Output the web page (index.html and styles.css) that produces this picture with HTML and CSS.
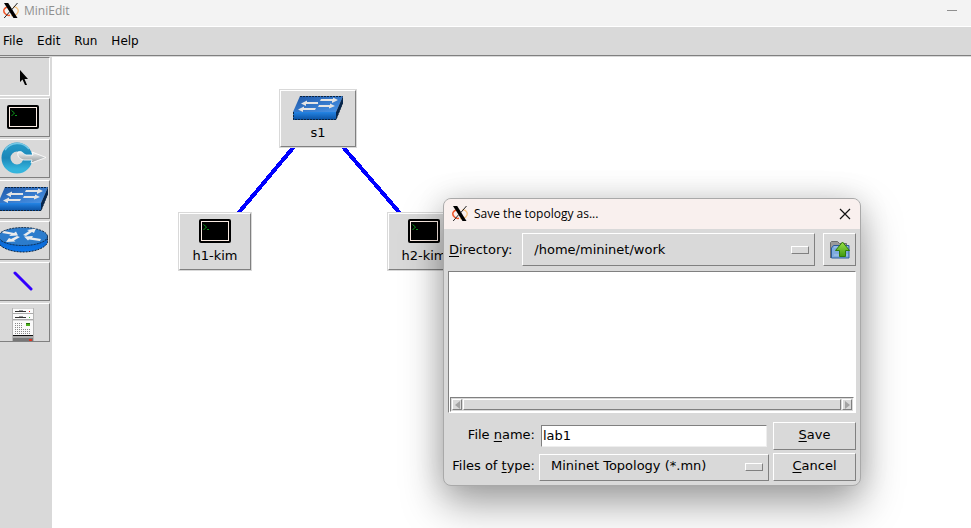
FILE: index.html
```
<!DOCTYPE html>
<html lang="en">
<head>
<meta charset="utf-8">
<title>MiniEdit</title>
<link rel="stylesheet" href="styles.css">
</head>
<body>
<svg class="defs" width="0" height="0" aria-hidden="true">
  <defs>
    <linearGradient id="blue" x1="0" y1="0" x2="1" y2="1">
      <stop offset="0" stop-color="#1d56a6"/><stop offset="1" stop-color="#4a96ea"/>
    </linearGradient>
    <linearGradient id="front" x1="0" y1="0" x2="0" y2="1">
      <stop offset="0" stop-color="#2484e4"/><stop offset="1" stop-color="#0a4fa0"/>
    </linearGradient>
    <linearGradient id="rim" x1="0" y1="0" x2="0" y2="1">
      <stop offset="0" stop-color="#0f62c4"/><stop offset="1" stop-color="#0a78f0"/>
    </linearGradient>
    <linearGradient id="ring" x1="0" y1="0" x2="0" y2="1">
      <stop offset="0" stop-color="#2496c4"/><stop offset=".5" stop-color="#1a86b8"/><stop offset="1" stop-color="#35b4dc"/>
    </linearGradient>
    <linearGradient id="silver" x1="0" y1="0" x2="0" y2="1">
      <stop offset="0" stop-color="#f4f4f4"/><stop offset="1" stop-color="#8f9699"/>
    </linearGradient>
    <linearGradient id="green" x1="0" y1="0" x2="0" y2="1">
      <stop offset="0" stop-color="#9be04a"/><stop offset="1" stop-color="#3f9a10"/>
    </linearGradient>
    <symbol id="x11" viewBox="0 0 16 16">
      <path d="M6 4.200C.5 4.500-.5 9 2.500 11.500 4 12.800 6 13 7 12.800" fill="none" stroke="#f0562a" stroke-width="1.500"/>
      <path d="M10.500 4.200c4.500.3 6 4 3.500 7-1.500 1.700-4 2-6 1.800" fill="none" stroke="#f8c27c" stroke-width="1.300"/>
      <path d="M1 .5h4.200L14.500 15.500h-4z" fill="#000"/>
      <path d="M14.500.500 8.600 7.300M6.800 9 1.200 15.500" stroke="#222" stroke-width="1"/>
    </symbol>
    <symbol id="host" viewBox="0 0 32 24">
      <rect width="32" height="24" rx="2" fill="#000"/>
      <rect x="2.500" y="2.500" width="27" height="19" fill="none" stroke="#fbece4"/>
      <path d="M4.500 5.500l3 2.500-3 3M8 10.500h2" fill="none" stroke="#0c9a1c"/>
    </symbol>
    <symbol id="switch" viewBox="0 0 50 24">
      <path d="M7 0H50L43 16H0z" fill="url(#blue)"/>
      <path d="M0 16H43V24H0z" fill="url(#front)"/>
      <path d="M50 0V7L43 24V16z" fill="#06264e"/>
      <path d="M7 .5H49.500M.5 16V23.500H43L49.500 7" fill="none" stroke="#0b2440" stroke-dasharray="2 1"/>
      <g fill="#e4e4e4">
        <path d="M28 3h12V1.500l5 2.500-6 3V5H27z"/>
        <path d="M26 9h11V7.500l5 2.500-6 2.500V11H25z"/>
        <path d="M25 6H14V4.500L8 7.500l5 2.500V8H25z"/>
        <path d="M23 12H11v-1.500L5 13.500l5 2.500V14h12z"/>
      </g>
    </symbol>
    <symbol id="router" viewBox="0 0 50 26">
      <path d="M.5 9.500v6c2 5.500 13 9.500 24.500 9.500s22.500-4 24.500-9.500v-6z" fill="url(#rim)" stroke="#0b2440" stroke-dasharray="2 1"/>
      <ellipse cx="25" cy="9.500" rx="24.500" ry="9" fill="#2c7ccc" stroke="#0b2440" stroke-dasharray="2 1"/>
      <g fill="#ececec">
        <path d="M6 4l10 2 2-1.500 2 4-9 .500 2-1.500L4 6z"/>
        <path d="M25 8l6-4-2-1 9-1.500L36 6l-2-1-6 4z"/>
        <path d="M22 10l-6 3.500 1.500 1L8 15l3-4 2 1 6-3z"/>
        <path d="M43 12l-9-1.500 1-1.500-9 .500 4 4 1-1 11 1.500z"/>
      </g>
    </symbol>
    <symbol id="legacy" viewBox="0 0 46 32">
      <circle cx="17" cy="16" r="11" fill="none" stroke="url(#ring)" stroke-width="9"/>
      <path d="M5 8A15 15 0 0 1 29 7" fill="none" stroke="#79c9e6" stroke-width="1.500"/>
      <path d="M18 10c4-2 5 2 8 3h7l-1-3 14 5.500L31 21l1-3h-8c-5-1-7-4-6-8z" fill="url(#silver)" stroke="#fff" stroke-width=".8"/>
    </symbol>
    <symbol id="server" viewBox="0 0 22 33">
      <path d="M1 0h20v5H1zM1 6h20v5H1z" fill="#fafafa"/>
      <path d="M1 0h20M1 5.500h20M1 11.500h20" stroke="#aaa"/>
      <path d="M3 3.500h11M3 9.500h11" stroke="#333"/>
      <path d="M7 2.500h4M7 8.500h4" stroke="#999"/>
      <path d="M17 3.500h1" stroke="#d11"/><path d="M17 9.500h1" stroke="#3b3"/>
      <path d="M1 13h20v14H1z" fill="#fafafa"/>
      <path d="M3 15.500h8M3 17.500h8M3 19.500h8M3 21.500h16M3 23.500h16M3 25.500h16" stroke="#888" stroke-dasharray="1 1"/>
      <path d="M14 15h4v3h-4z" fill="#4caf1b"/><path d="M14 15.500h4" stroke="#276b0e"/>
      <path d="M.5 0v33M21.500 0v33" stroke="#b5b5b5"/>
      <path d="M1 27h20v1H1z" fill="#111"/>
      <path d="M1 28h20v2H1z" fill="#aaa"/><path d="M1 30h20v3H1z" fill="#777"/>
      <path d="M17 31h3v2h-3z" fill="#d32"/>
    </symbol>
  </defs>
</svg>

<header class="titlebar">
  <svg class="logo" width="16" height="17"><use href="#x11"/></svg>
  <h1>MiniEdit</h1>
  <button class="minimize" type="button" aria-label="Minimize"><span></span></button>
</header>

<nav class="menubar" aria-label="Main">
  <button type="button">File</button>
  <button type="button">Edit</button>
  <button type="button">Run</button>
  <button type="button">Help</button>
</nav>

<main class="workspace">
  <div class="toolbar" role="toolbar" aria-label="Tools">
    <button class="tool active" type="button" aria-label="Select">
      <svg width="10" height="16" viewBox="0 0 10 16"><path d="M1 0v12l2.500-2.500L6 15h2L5.500 9H9z"/></svg>
    </button>
    <button class="tool" type="button" aria-label="Host"><svg width="32" height="24"><use href="#host"/></svg></button>
    <button class="tool" type="button" aria-label="Legacy switch"><svg width="46" height="32"><use href="#legacy"/></svg></button>
    <button class="tool" type="button" aria-label="Switch"><svg width="50" height="24"><use href="#switch"/></svg></button>
    <button class="tool" type="button" aria-label="Legacy router"><svg width="50" height="26"><use href="#router"/></svg></button>
    <button class="tool" type="button" aria-label="Link">
      <svg width="20" height="20" viewBox="0 0 20 20"><path d="M2 2l16 16" stroke="#30f" stroke-width="3" stroke-linecap="round"/></svg>
    </button>
    <button class="tool tall" type="button" aria-label="Controller"><svg width="22" height="33"><use href="#server"/></svg></button>
  </div>

  <section class="canvas" aria-label="Topology">
    <svg class="links" width="450" height="260" aria-hidden="true">
      <path d="M266 61L163 184M266 61L372 184" stroke="#00f" stroke-width="4" shape-rendering="crispEdges"/>
    </svg>
    <button class="node s1" type="button"><svg width="50" height="24"><use href="#switch"/></svg>s1</button>
    <button class="node h1" type="button"><svg width="32" height="24"><use href="#host"/></svg>h1-kim</button>
    <button class="node h2" type="button"><svg width="32" height="24"><use href="#host"/></svg>h2-kim</button>
  </section>
</main>

<form class="dialog" role="dialog" aria-labelledby="dialog-title">
  <div class="dialog-title">
    <svg class="logo" width="16" height="17"><use href="#x11"/></svg>
    <h2 id="dialog-title">Save the topology as...</h2>
    <button class="close" type="button" aria-label="Close">
      <svg width="12" height="12" viewBox="0 0 12 12"><path d="M1 1l10 10M11 1L1 11" stroke="#111" stroke-width="1.200"/></svg>
    </button>
  </div>
  <div class="dialog-body">
    <div class="directory">
      <label for="dir"><u>D</u>irectory:</label>
      <span class="picker"><select id="dir"><option>/home/mininet/work</option></select></span>
      <button class="up" type="button" aria-label="Up one folder">
        <svg width="22" height="20" viewBox="0 0 22 20">
          <path d="M1.500 18V2.500l1-1h6l2 2h7V8" fill="#9a9a9a" stroke="#6f6f6f"/>
          <path d="M4.500 5.500h15.500v12.500H2.500V8z" fill="#7fabdf" stroke="#2d5c9c"/>
          <path d="M5 7h14M5 15h14" stroke="#a9c8ea"/>
          <path d="M13.500 2l7 8.500h-4v6h-6v-6h-4z" fill="url(#green)" stroke="#2f7a0a"/>
        </svg>
      </button>
    </div>
    <div class="files">
      <div class="list" role="listbox" aria-label="Files"></div>
      <div class="scrollbar">
        <button type="button" aria-label="Scroll left"><svg width="5" height="8"><path d="M5 0v8L0 4z" fill="#a3a3a3"/></svg></button>
        <div class="thumb"></div>
        <button type="button" aria-label="Scroll right"><svg width="5" height="8"><path d="M0 0v8l5-4z" fill="#a3a3a3"/></svg></button>
      </div>
    </div>
    <div class="fields">
      <label for="name">File <u>n</u>ame:</label>
      <input id="name" type="text" value="lab1">
      <button class="action" type="submit"><u>S</u>ave</button>
      <label for="type">Files of <u>t</u>ype:</label>
      <span class="picker"><select id="type"><option>Mininet Topology (*.mn)</option></select></span>
      <button class="action" type="button"><u>C</u>ancel</button>
    </div>
  </div>
</form>
</body>
</html>
```
FILE: styles.css
```
* {
  box-sizing: border-box;
}

body {
  margin: 0;
  min-height: 100vh;
  display: flex;
  flex-direction: column;
  position: relative;
  background: #fff;
  color: #000;
  font: 13px/16px "DejaVu Sans", sans-serif;
}

button,
input,
select {
  margin: 0;
  padding: 0;
  border: 0;
  border-radius: 0;
  background: #d9d9d9;
  color: inherit;
  font: inherit;
}

svg {
  display: block;
  flex: none;
}

u {
  text-underline-offset: 2px;
  text-decoration-thickness: 1px;
  text-decoration-skip-ink: none;
}

.defs {
  position: absolute;
}

.titlebar {
  display: flex;
  align-items: center;
  gap: 5px;
  height: 27px;
  padding: 0 14px 5px 3px;
  border-bottom: 1px solid #fff;
  background: #f3f3f3;
}

.titlebar h1 {
  flex: 1;
  margin: 0;
  color: #8f8f8f;
  font: 12px/16px "Open Sans", sans-serif;
}

.minimize {
  padding: 6px 0;
  background: none;
}

.minimize span {
  display: block;
  width: 10px;
  height: 1px;
  background: #8f8f8f;
}

.menubar {
  display: flex;
  align-items: center;
  gap: 14px;
  height: 29px;
  padding-left: 3px;
  border-bottom: 1px solid #808080;
  background: #d9d9d9;
  font-size: 12px;
}

.workspace {
  flex: 1;
  display: flex;
  border-top: 1px solid #d9d9d9;
}

.toolbar {
  flex: none;
  width: 52px;
  display: flex;
  flex-direction: column;
  gap: 2px;
  padding-right: 2px;
  background: #d9d9d9;
}

.tool {
  display: flex;
  align-items: center;
  justify-content: center;
  height: 39px;
  padding: 0 3px 1px 0;
  overflow: hidden;
  border: solid;
  border-width: 1px 1px 1px 0;
  border-color: #fff #808080 #808080;
}

.tool.active {
  padding: 2px 2px 0 0;
  border-color: #808080 #fff #fff;
}

.tool.tall {
  align-items: flex-start;
  padding-top: 4px;
}

.canvas {
  flex: 1;
  position: relative;
}

.links {
  position: absolute;
  top: 0;
  left: 0;
}

.node {
  position: absolute;
  display: flex;
  flex-direction: column;
  align-items: center;
  gap: 5px;
  width: 74px;
  height: 59px;
  padding-top: 5px;
  border: 2px solid;
  border-color: #fff #808080 #808080 #fff;
  outline: 1px solid #d9d9d9;
  outline-offset: -1px;
}

.s1 {
  top: 32px;
  left: 227px;
  width: 78px;
}

.h1 {
  top: 155px;
  left: 126px;
}

.h2 {
  top: 155px;
  left: 335px;
}

.dialog {
  position: absolute;
  top: 198px;
  left: 443px;
  width: 418px;
  overflow: hidden;
  border: 1px solid #a9a9a9;
  border-radius: 8px;
  background: #d9d9d9;
  box-shadow: 0 18px 42px rgba(0, 0, 0, 0.36), 0 0 30px rgba(0, 0, 0, 0.12);
}

.dialog-title {
  display: flex;
  align-items: center;
  gap: 6px;
  height: 30px;
  padding: 0 9px 1px 8px;
  background: #f9f0ee;
}

.dialog-title h2 {
  flex: 1;
  margin: 0;
  font: 12px/16px "Open Sans", sans-serif;
}

.close {
  background: none;
}

.dialog-body {
  padding: 4px;
}

.directory {
  display: flex;
  align-items: center;
  gap: 8px;
  padding-left: 1px;
}

.directory label {
  padding-right: 2px;
}

.picker {
  position: relative;
  display: flex;
  flex: 1;
}

.picker::after {
  content: "";
  position: absolute;
  top: calc(50% - 4px);
  right: 6px;
  width: 16px;
  height: 6px;
  border: 1px solid;
  border-color: #fff #808080 #808080 #fff;
  pointer-events: none;
}

.picker select {
  width: 100%;
  height: 27px;
  padding-left: 11px;
  appearance: none;
}

.directory select {
  height: 33px;
}

select,
.up,
.action {
  border: 1px solid;
  border-color: #fff #808080 #808080 #fff;
}

.up {
  display: flex;
  align-items: center;
  justify-content: center;
  width: 33px;
  height: 33px;
}

.files {
  margin: 5px 0 9px;
  border: 1px solid;
  border-color: #808080 #fff #fff #808080;
  background: #fff;
}

.list {
  height: 125px;
}

.scrollbar {
  display: flex;
  gap: 1px;
  height: 15px;
  margin: 0 1px;
  padding: 1px;
  border: 1px solid;
  border-color: #808080 #fff #fff #808080;
  background: #d9d9d9;
}

.scrollbar button,
.thumb {
  border: 1px solid;
  border-color: #fff #808080 #808080 #fff;
  background: #d9d9d9;
}

.scrollbar button {
  display: flex;
  align-items: center;
  justify-content: center;
  width: 10px;
}

.thumb {
  flex: 1;
}

.fields {
  display: grid;
  grid-template-columns: 87px 1fr 83px;
  align-items: center;
  gap: 3px 4px;
}

.fields label {
  padding-bottom: 2px;
  text-align: right;
  white-space: nowrap;
}

.fields input {
  height: 22px;
  min-width: 0;
  margin: 0 2px;
  padding: 0 1px 2px;
  border: 1px solid;
  border-color: #808080 #eee #eee #808080;
  background: #fff;
}

.fields select {
  padding-bottom: 2px;
}

.action {
  height: 28px;
  padding-bottom: 2px;
}
```
